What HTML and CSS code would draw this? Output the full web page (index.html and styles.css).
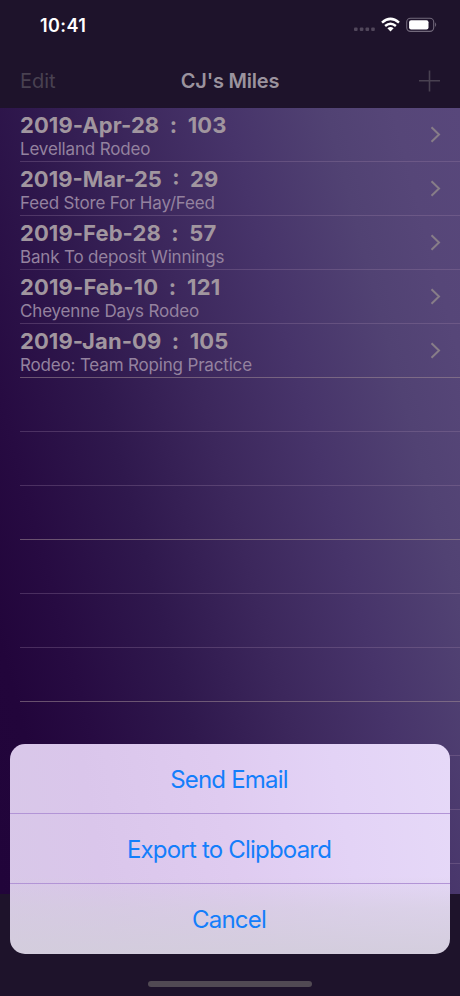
FILE: index.html
```html
<!DOCTYPE html>
<html lang="en">
<head>
<meta charset="utf-8">
<title>CJ's Miles</title>
<link rel="stylesheet" href="styles.css">
</head>
<body>
<div class="screen">
  <header class="top">
    <div class="status">
      <span class="time">10:41</span>
      <svg class="indicators" width="84" height="18" viewBox="0 0 84 18">
        <g fill="#51475b"><rect x="1" y="10.5" width="3.6" height="3.4" rx="1"/><rect x="6.8" y="10.5" width="3.6" height="3.4" rx="1"/><rect x="12.5" y="10.5" width="3.6" height="3.4" rx="1"/><rect x="18.2" y="10.5" width="3.6" height="3.4" rx="1"/></g>
        <g fill="none" stroke="#fff" stroke-width="2.5"><path d="M29 5.6Q37.5-1.8 46 5.6"/><path d="M32.1 9Q37.5 4.6 42.9 9"/></g>
        <path fill="#fff" d="M34.4 11.2Q37.5 8.8 40.6 11.2L37.5 14.4Z"/>
        <rect x="53.7" y="1.2" width="27" height="13.2" rx="3.8" fill="none" stroke="#72697b" stroke-width="1.1"/>
        <rect x="56.1" y="3.2" width="19.4" height="9.2" rx="2" fill="#fff"/>
        <path d="M82.1 5.3Q84.3 7.6 82.1 9.9Z" fill="#72697b"/>
      </svg>
    </div>
    <nav class="nav">
      <span class="edit">Edit</span>
      <h1>CJ's Miles</h1>
      <svg class="plus" width="22" height="22" viewBox="0 0 22 22"><path d="M11.5 .5V21.5M1 10.8H22" stroke="#494151" stroke-width="1.6"/></svg>
    </nav>
  </header>
  <main class="list">
    <div class="row"><div><p class="date">2019-Apr-28&nbsp; :&nbsp; 103</p><p class="note">Levelland Rodeo</p></div><svg class="chev" width="11" height="17" viewBox="0 0 11 17"><path d="M1.5 1.3L9 8.5L1.5 15.7"/></svg></div>
    <div class="row"><div><p class="date mar">2019-Mar-25&nbsp; :&nbsp; 29</p><p class="note">Feed Store For Hay/Feed</p></div><svg class="chev" width="11" height="17" viewBox="0 0 11 17"><path d="M1.5 1.3L9 8.5L1.5 15.7"/></svg></div>
    <div class="row"><div><p class="date">2019-Feb-28&nbsp; :&nbsp; 57</p><p class="note">Bank To deposit Winnings</p></div><svg class="chev" width="11" height="17" viewBox="0 0 11 17"><path d="M1.5 1.3L9 8.5L1.5 15.7"/></svg></div>
    <div class="row"><div><p class="date feb">2019-Feb-10&nbsp; :&nbsp; 121</p><p class="note">Cheyenne Days Rodeo</p></div><svg class="chev" width="11" height="17" viewBox="0 0 11 17"><path d="M1.5 1.3L9 8.5L1.5 15.7"/></svg></div>
    <div class="row bright"><div><p class="date">2019-Jan-09&nbsp; :&nbsp; 105</p><p class="note">Rodeo: Team Roping Practice</p></div><svg class="chev" width="11" height="17" viewBox="0 0 11 17"><path d="M1.5 1.3L9 8.5L1.5 15.7"/></svg></div>
    <div class="row"></div>
    <div class="row"></div>
    <div class="row bright"></div>
    <div class="row"></div>
    <div class="row"></div>
    <div class="row bright"></div>
    <div class="row"></div>
    <div class="row"></div>
    <div class="row"></div>
  </main>
  <footer class="toolbar"></footer>
  <div class="sheet">
    <div class="action"><span>Send Email</span></div>
    <div class="action"><span>Export to Clipboard</span></div>
    <div class="action"><span>Cancel</span></div>
  </div>
  <div class="home"></div>
</div>
</body>
</html>
```
FILE: styles.css
```css
* { box-sizing: border-box; }
body { margin: 0; background: #1e132b; font-family: Inter, "Liberation Sans", sans-serif; }
p, h1 { margin: 0; }
.screen { position: relative; width: 460px; height: 996px; overflow: hidden; display: flex; flex-direction: column; background: #1e132b; }
.top { flex: none; height: 108px; display: flex; flex-direction: column; }
.status { height: 54px; display: flex; justify-content: space-between; align-items: flex-start; padding: 15px 23px 0 40px; }
.time { color: #fff; font-size: 18px; font-weight: 600; line-height: 21px; letter-spacing: .4px; white-space: nowrap; }
.indicators { display: block; margin-top: 2px; overflow: visible; }
.nav { height: 54px; display: grid; grid-template-columns: 1fr auto 1fr; align-items: center; padding: 0 20px; white-space: nowrap; }
.edit { color: #494151; font-size: 20px; }
.nav h1 { color: #9b939e; font-size: 20px; font-weight: 600; letter-spacing: -.2px; }
.plus { justify-self: end; }
.list { flex: none; height: 786px; overflow: hidden; background: linear-gradient(75deg, #21043a 0%, #22053b 10%, #270b42 20%, #2f184d 35%, #3c275c 50%, #47346a 65%, #514273 80%, #564678 90%, #58477b 100%); }
.row { height: 54px; margin-left: 20px; padding-right: 19px; display: flex; justify-content: space-between; align-items: flex-start; border-bottom: 1px solid rgba(160, 132, 170, .3); }
.bright { border-bottom-color: rgba(160, 140, 150, .55); }
.date { color: #a1969f; font-size: 22px; font-weight: 700; line-height: 26px; height: 31px; padding-top: 4px; letter-spacing: .07px; white-space: pre; }
.date.mar { letter-spacing: 0; }
.date.feb { letter-spacing: .14px; }
.note { color: #94829f; font-size: 17px; line-height: 20px; letter-spacing: -.17px; white-space: nowrap; }
.chev { display: block; margin-top: 18px; fill: none; stroke: #877d88; stroke-width: 2; }
.toolbar { flex: 1; background: #1e132b; }
.sheet { position: absolute; left: 10.4px; top: 743.5px; width: 439.2px; height: 210px; border-radius: 15px; overflow: hidden; display: grid; grid-template-rows: 70px 70.5px 69.5px; background: linear-gradient(180deg, rgba(211, 205, 220, 0) 63%, rgba(211, 205, 220, .55) 78%, rgba(211, 205, 220, .95) 100%), linear-gradient(80deg, #d8c8e8 0%, #dac6eb 22%, #dfcbf0 50%, #e3d3f6 75%, #e6d9f8 100%); }
.action { display: flex; align-items: center; justify-content: center; padding: 2px 2px 0 0; color: #147efb; font-size: 24px; letter-spacing: -.8px; white-space: nowrap; border-bottom: 1px solid #b294d6; }
.action:last-child { border-bottom: 0; }
.home { position: absolute; left: 148px; top: 981px; width: 164px; height: 6px; border-radius: 3px; background: #514a53; }
```
